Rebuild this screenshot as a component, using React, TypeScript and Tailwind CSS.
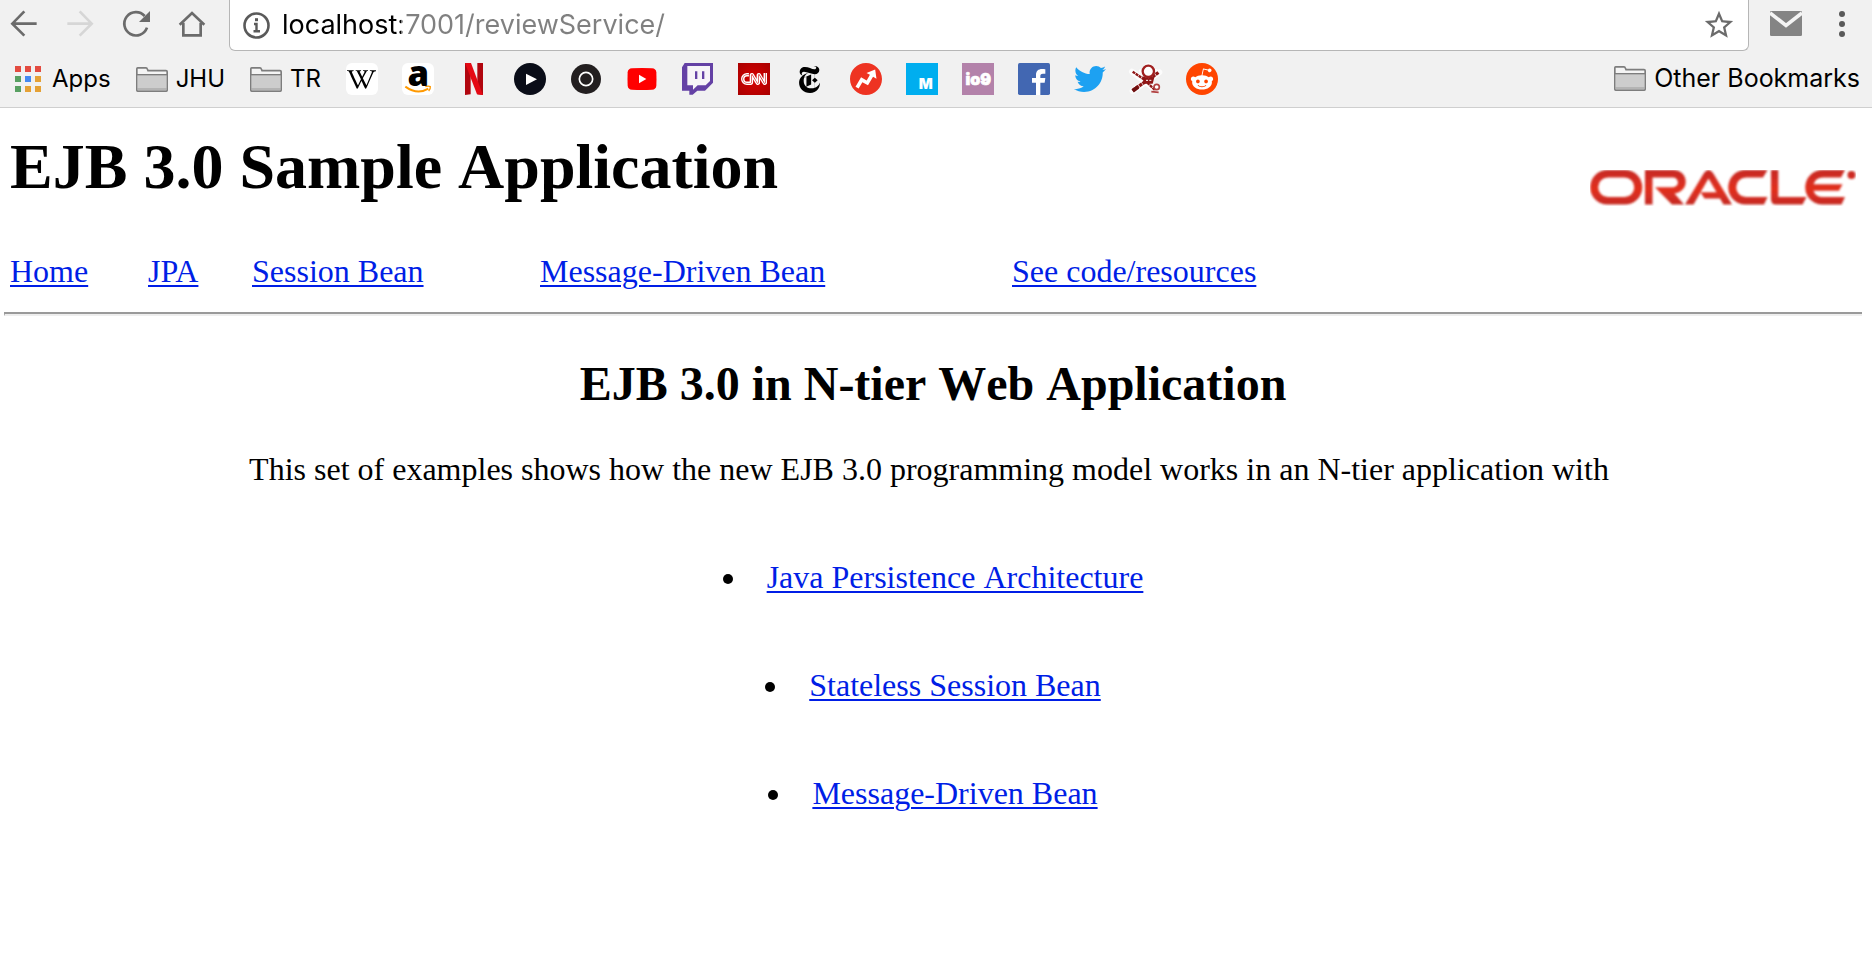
import type { ReactNode } from "react";
import { SiBuzzfeed, SiNewyorktimes, SiWikipedia, SiCnn } from "react-icons/si";
import { FaTwitter, FaRedditAlien } from "react-icons/fa";
import { MdStarBorder } from "react-icons/md";

function ToolButton({ label, muted, children }: { label: string; muted?: boolean; children: ReactNode }) {
  return (
    <button type="button" aria-label={label} className={muted ? "size-8 shrink-0 text-[#d6d6d6]" : "size-8 shrink-0 text-[#6b6b6b]"}>
      <svg viewBox="0 0 96 96" className="size-8" fill="none" stroke="currentColor" strokeWidth="8">
        {children}
      </svg>
    </button>
  );
}

function AppsIcon() {
  const colors = ["#e34b40", "#e34b40", "#e34b40", "#58a062", "#4589f0", "#e5a135", "#58a062", "#e5a135", "#e5a135"];
  return (
    <svg viewBox="0 0 26 26" className="size-[26px]" shapeRendering="crispEdges">
      {colors.map((color, i) => (
        <rect key={i} x={(i % 3) * 10} y={Math.floor(i / 3) * 10} width="6" height="6" fill={color} />
      ))}
    </svg>
  );
}

function FolderIcon() {
  return (
    <svg viewBox="0 0 96 75" className="h-[25px] w-8">
      <path d="M2.500 70V5Q2.500 2.500 5 2.500H30Q33 2.500 34 6L36 11H90Q93.500 11 93.500 14V70Q93.500 72.500 91 72.500H5Q2.500 72.500 2.500 70Z" fill="#f4f4f4" stroke="#7d7d7d" strokeWidth="5" />
      <path d="M5 23H91V63H5Z" fill="#cdcdcd" />
      <path d="M5 63H91V70H5Z" fill="#b4b4b4" />
      <path d="M3 23H93" stroke="#7d7d7d" strokeWidth="4" />
    </svg>
  );
}

function Glyph({ children }: { children: ReactNode }) {
  return (
    <svg viewBox="0 0 96 96" className="size-8 overflow-visible">
      {children}
    </svg>
  );
}

const sites: { name: string; icon: ReactNode }[] = [
  {
    name: "Wikipedia",
    icon: (
      <span className="flex size-8 items-center justify-center rounded-md bg-white">
        <SiWikipedia className="size-[29px]" />
      </span>
    ),
  },
  {
    name: "Amazon",
    icon: (
      <span className="flex size-8 rounded-md bg-white">
        <Glyph>
          <text x="49" y="68" textAnchor="middle" fontSize="104" fontWeight="800" fontFamily="Open Sans, sans-serif">a</text>
          <path d="M10 71Q46 97 79 77" fill="none" stroke="#ff9900" strokeWidth="6" />
          <path d="M70 71Q80 68 85 71Q86 77 80 84" fill="none" stroke="#ff9900" strokeWidth="4" />
        </Glyph>
      </span>
    ),
  },
  {
    name: "Netflix",
    icon: (
      <Glyph>
        <path d="M21 0H38V94L21 96ZM58 0H75V96L58 94Z" fill="#b1060f" />
        <path d="M21 0H39L75 96L57 94Z" fill="#e50914" />
      </Glyph>
    ),
  },
  {
    name: "Player",
    icon: (
      <Glyph>
        <circle cx="48" cy="48" r="48" fill="#0a0d18" />
        <path d="M36 32L69 49L36 66Z" fill="#ffffff" />
      </Glyph>
    ),
  },
  {
    name: "Podcasts",
    icon: (
      <Glyph>
        <circle cx="48" cy="48" r="45" fill="#231f20" />
        <circle cx="48" cy="48" r="20" fill="none" stroke="#ffffff" strokeWidth="5" />
      </Glyph>
    ),
  },
  {
    name: "YouTube",
    icon: (
      <Glyph>
        <path d="M18 16Q48 14 78 16Q90 17 91 28Q92 48 91 68Q90 79 78 80Q48 82 18 80Q6 79 5 68Q4 48 5 28Q6 17 18 16Z" fill="#ff0000" />
        <path d="M39 35L61 48L39 61Z" fill="#ffffff" />
      </Glyph>
    ),
  },
  {
    name: "Twitch",
    icon: (
      <Glyph>
        <path d="M8 0H93V59L69 83H46L32 95H22V83H0V13Z" fill="#6441a5" />
        <path d="M16 9H84V54L71 67H47L33 80V67H16Z" fill="#f6f4f8" />
        <path d="M39 25H46V48H39ZM60 25H67V48H60Z" fill="#6441a5" />
      </Glyph>
    ),
  },
  {
    name: "CNN",
    icon: (
      <span className="flex size-8 items-center justify-center bg-radial from-[#d80000] to-[#a80000]">
        <SiCnn className="size-[26px] text-white" />
      </span>
    ),
  },
  {
    name: "The New York Times",
    icon: (
      <span className="flex size-8 items-center justify-center">
        <SiNewyorktimes className="size-[27px]" />
      </span>
    ),
  },
  {
    name: "BuzzFeed",
    icon: (
      <span className="flex size-8 rounded-full bg-[radial-gradient(white_60%,transparent_62%)]">
        <SiBuzzfeed className="size-8 text-[#ee3322]" />
      </span>
    ),
  },
  {
    name: "M",
    icon: (
      <Glyph>
        <rect width="96" height="96" fill="#00aeef" />
        <text x="59" y="78" textAnchor="middle" fontSize="44" fontWeight="900" fontFamily="Inter, sans-serif" fill="#ffffff">M</text>
      </Glyph>
    ),
  },
  {
    name: "io9",
    icon: (
      <Glyph>
        <rect width="96" height="96" fill="#b382aa" />
        <text x="49" y="65" textAnchor="middle" fontSize="48" fontWeight="900" fontFamily="Inter, sans-serif" fill="#ffffff" stroke="#ffffff" strokeWidth="2">io9</text>
      </Glyph>
    ),
  },
  {
    name: "Facebook",
    icon: (
      <Glyph>
        <rect width="96" height="96" rx="5" fill="#4267b2" />
        <path d="M54 96V59H42V45H54V36C54 24 61 18 72 18C77 18 80 18.500 82 19V32H75C68 32 67 35 67 39V45H82L80 59H67V96Z" fill="#ffffff" />
      </Glyph>
    ),
  },
  { name: "Twitter", icon: <FaTwitter className="size-8 text-[#1da1f2]" /> },
  {
    name: "Pirate",
    icon: (
      <Glyph>
        <path d="M8 84L88 28M6 26L80 82M35 26H75M55 8V56" stroke="#ffffff" strokeWidth="18" strokeLinecap="round" opacity="0.8" />
        <path d="M8 82L46 56L86 28" stroke="#8f1616" strokeWidth="10" strokeDasharray="10 2" fill="none" />
        <path d="M8 26L40 48L76 82" stroke="#8f1616" strokeWidth="7" strokeDasharray="9 2" fill="none" />
        <circle cx="55" cy="25" r="17" fill="#ffffff" stroke="#a02020" strokeWidth="7" />
        <path d="M37 40L42 62H68L74 40L56 46Z" fill="#8f1616" />
        <path d="M48 52H54M58 52H64" stroke="#ffffff" strokeWidth="3" />
        <circle cx="80" cy="72" r="8" fill="#ffffff" stroke="#b04040" strokeWidth="5" />
        <path d="M64 86L86 88" stroke="#b04040" strokeWidth="5" />
        <path d="M8 84L24 72" stroke="#6e0f0f" strokeWidth="12" />
      </Glyph>
    ),
  },
  {
    name: "Reddit",
    icon: (
      <span className="flex size-8 items-center justify-center rounded-full bg-[#ff4500]">
        <FaRedditAlien className="size-6 text-white" />
      </span>
    ),
  },
];

function OracleLogo() {
  return (
    <svg viewBox="0 0 266 36" role="img" aria-label="Oracle" className="h-9 w-[266px] shrink-0">
      <defs>
        <linearGradient id="oracle-red" gradientUnits="userSpaceOnUse" x1="0" y1="0" x2="0" y2="35">
          <stop offset="0" stopColor="#c62a22" />
          <stop offset="0.55" stopColor="#e2301f" />
          <stop offset="1" stopColor="#c42a22" />
        </linearGradient>
        <filter id="oracle-soft" x="-2%" y="-10%" width="104%" height="120%">
          <feGaussianBlur stdDeviation="0.8" />
        </filter>
      </defs>
      <g fill="url(#oracle-red)" filter="url(#oracle-soft)">
        <path fillRule="evenodd" d="M17.500 0H35A17.300 17.300 0 0 1 35 34.600H17.500A17.300 17.300 0 0 1 17.500 0ZM18 7.500A9.800 9.800 0 0 0 18 27.100H34.500A9.800 9.800 0 0 0 34.500 7.500Z" />
        <path d="M55 0H83.500A11.700 11.700 0 0 1 84.500 23.400L94 34.600H82L65 17.300H83A4.900 4.900 0 0 0 83 7.500H62.500V34.600H55Z" />
        <path d="M95 34.600L114 3Q118.500 -3 123 3L142 34.600H133.500L130 28.500H114.500L110.500 22.300H126.500L118.500 8.500L103.500 34.600Z" />
        <path d="M177.500 0H155.500A17.300 17.300 0 0 0 155.500 34.600H174L177.500 27.100H156A9.800 9.800 0 0 1 156 7.500H173Z" />
        <path d="M181 0H188.300V27.100H216.500L212.500 34.600H186Q181 34.600 181 29Z" />
        <path d="M255 0H232.500A17.300 17.300 0 0 0 232.500 34.600H251.500L255 27.100H233Q225.500 27 223.500 20.700H249L252.500 14.300H223.500Q225.500 7.600 233 7.500H251Z" />
        <circle cx="261.500" cy="5" r="4" />
      </g>
    </svg>
  );
}

const linkClass = "text-[#001ee6] underline decoration-2 underline-offset-[3px]";
const navLinks = ["Home", "JPA", "Session Bean", "Message-Driven Bean", "See code/resources"];
const topics = ["Java Persistence Architecture", "Stateless Session Bean", "Message-Driven Bean"];

export default function App() {
  return (
    <div className="min-h-screen bg-white text-black">
      <header className="border-b border-[#cfcfcf] bg-[#f1f1f1] font-['Inter',sans-serif]">
        <div className="flex h-[51px] items-start gap-[21px] pl-2">
          <div className="flex gap-6 pt-2">
            <ToolButton label="Back">
              <path d="M49 10L13 47L49 83M13 47H86" />
            </ToolButton>
            <ToolButton label="Forward" muted>
              <path d="M47 10L83 47L47 83M83 47H10" />
            </ToolButton>
            <ToolButton label="Reload">
              <path d="M81 59A35 35 0 1 1 74 24" />
              <path d="M90 9V42H57Z" fill="currentColor" stroke="none" />
            </ToolButton>
            <ToolButton label="Home">
              <path d="M11 50L48 15L85 50" />
              <path d="M22 44V82H74V44" />
            </ToolButton>
          </div>
          <div className="flex h-[51px] grow items-center gap-3 rounded-b-md border border-t-0 border-[#b6b6b6] bg-white pr-3 pl-[13px]">
            <svg viewBox="0 0 27 27" className="size-[27px] shrink-0" fill="none" stroke="#5a5a5a">
              <circle cx="13.500" cy="13.500" r="12" strokeWidth="2.600" />
              <path d="M11 12H13.500V19M10.500 19.300H17" strokeWidth="2.400" />
              <path d="M12 7.700H15" strokeWidth="3" />
            </svg>
            <input
              type="text"
              aria-label="Address"
              defaultValue="localhost:7001/reviewService/"
              className="min-w-0 grow bg-[linear-gradient(to_right,#000_119px,#808080_119px)] bg-clip-text text-[27px] leading-8 text-transparent outline-none"
            />
            <button type="button" aria-label="Bookmark this page" className="shrink-0 text-[#6b6b6b]">
              <MdStarBorder className="size-[34px]" />
            </button>
          </div>
          <div className="flex gap-6 pt-2 pr-[14px]">
            <button type="button" aria-label="Mail" className="size-8">
              <svg viewBox="0 0 96 96" className="size-8">
                <rect y="9" width="96" height="75" rx="4" fill="#848484" />
                <path d="M0 15L48 52L96 15" fill="none" stroke="#f4f4f4" strokeWidth="11" />
              </svg>
            </button>
            <button type="button" aria-label="Menu" className="size-8">
              <svg viewBox="0 0 32 32" className="size-8" fill="#5a5a5a">
                <circle cx="16" cy="6" r="3" />
                <circle cx="16" cy="16" r="3" />
                <circle cx="16" cy="26" r="3" />
              </svg>
            </button>
          </div>
        </div>
        <nav aria-label="Bookmarks" className="flex h-14 items-center gap-[25px] pr-3 pl-[15px] text-2xl whitespace-nowrap">
          <a href="#apps" className="flex items-center gap-[11px]">
            <AppsIcon />
            Apps
          </a>
          <a href="#jhu" className="flex items-center gap-2">
            <FolderIcon />
            JHU
          </a>
          <a href="#tr" className="flex items-center gap-2">
            <FolderIcon />
            TR
          </a>
          <div className="flex gap-6">
            {sites.map((site) => (
              <a key={site.name} href="#site" aria-label={site.name} className="size-8 shrink-0">
                {site.icon}
              </a>
            ))}
          </div>
          <a href="#other" className="ml-auto flex items-center gap-2 text-[25px]">
            <FolderIcon />
            Other Bookmarks
          </a>
        </nav>
      </header>

      <main className="pt-[23px] pr-[10px] pl-1 font-['Liberation_Serif',serif] text-[32px] leading-9">
        <div className="flex items-end justify-between pr-1.5 pl-1.5">
          <h1 className="pb-[3px] text-[64px] leading-[72px] font-bold [font-kerning:none]">EJB 3.0 Sample Application</h1>
          <OracleLogo />
        </div>
        <nav aria-label="Sections" className="mt-[47px] grid grid-cols-[138px_104px_288px_472px_auto] pl-1.5">
          {navLinks.map((label) => (
            <div key={label}>
              <a href="#section" className={linkClass}>{label}</a>
            </div>
          ))}
        </nav>
        <hr className="mt-[23px] h-1 border-t-2 border-b-2 border-l border-t-[#9a9a9a] border-b-[#eeeeee] border-l-[#9a9a9a]" />
        <h2 className="mt-[41px] text-center text-5xl leading-[54px] font-bold [font-kerning:none]">EJB 3.0 in N-tier Web Application</h2>
        <p className="mt-10 pr-2 text-center">
          This set of examples shows how the new EJB 3.0 programming model works in an N-tier application with
        </p>
        <ul className="mt-[72px] flex flex-col gap-[72px] pb-[72px] [font-kerning:none]">
          {topics.map((topic) => (
            <li key={topic} className="flex items-center justify-center gap-[34px]">
              <span className="mt-1 size-[10px] rounded-full bg-black" />
              <a href="#topic" className={linkClass}>{topic}</a>
            </li>
          ))}
        </ul>
      </main>
    </div>
  );
}
